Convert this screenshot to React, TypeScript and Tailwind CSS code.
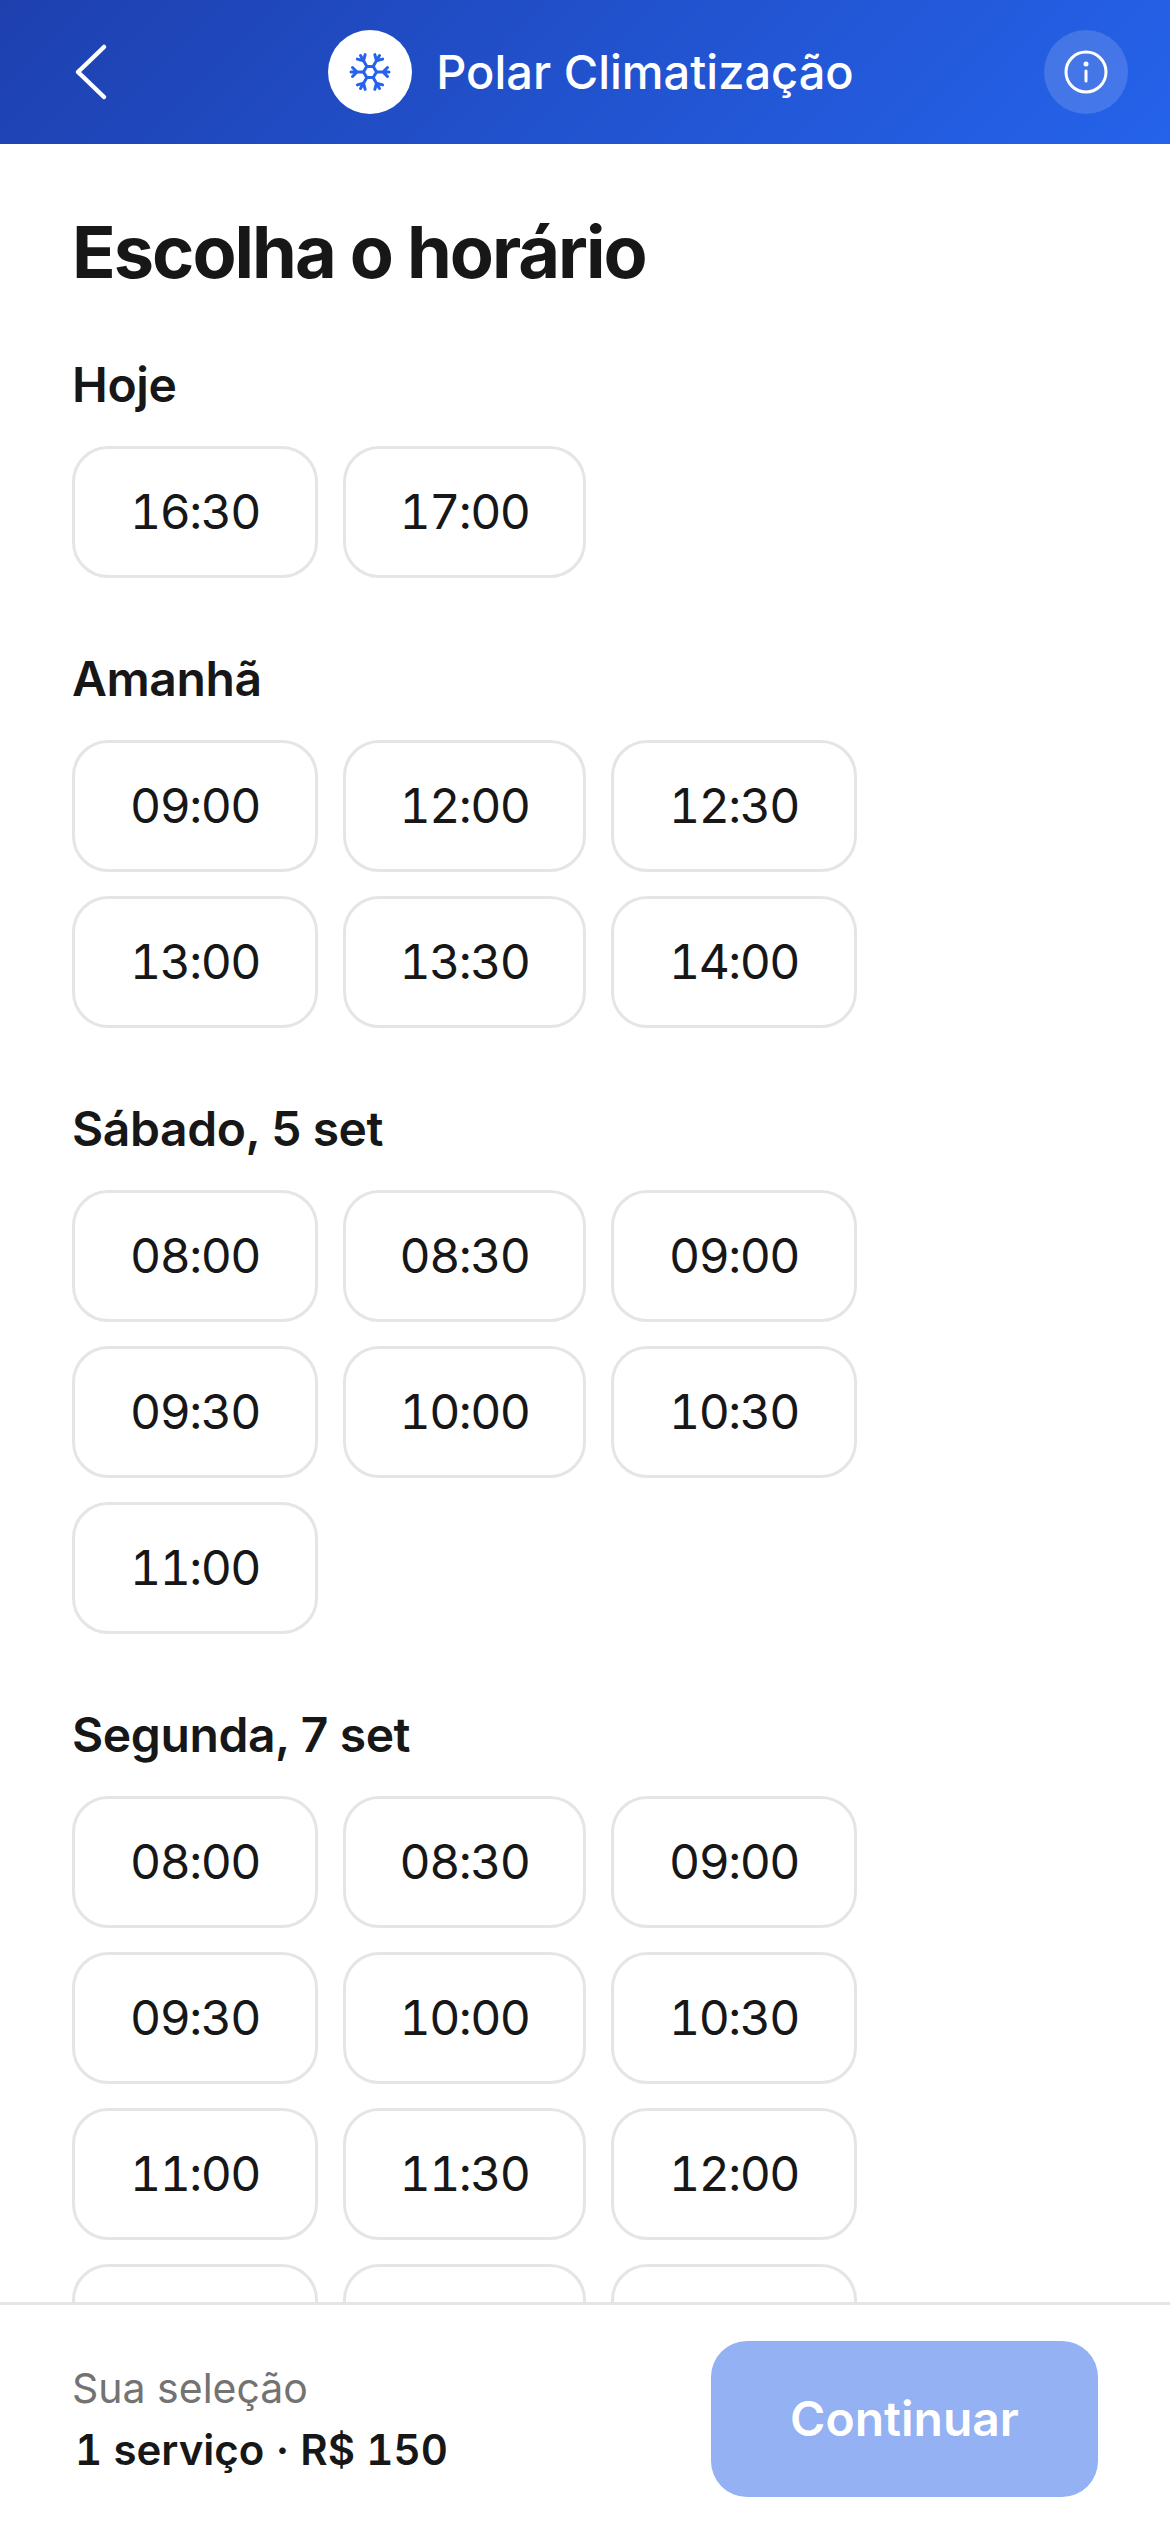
import React from "react";

const dias = [
  { nome: "Hoje", horarios: ["16:30", "17:00"] },
  { nome: "Amanhã", horarios: ["09:00", "12:00", "12:30", "13:00", "13:30", "14:00"] },
  { nome: "Sábado, 5 set", horarios: ["08:00", "08:30", "09:00", "09:30", "10:00", "10:30", "11:00"] },
  {
    nome: "Segunda, 7 set",
    horarios: ["08:00", "08:30", "09:00", "09:30", "10:00", "10:30", "11:00", "11:30", "12:00", "", "", ""],
  },
];

function Floco() {
  return (
    <svg width="42" height="42" viewBox="0 0 42 42" fill="none" stroke="#2563eb" strokeWidth="3" strokeLinecap="round" strokeLinejoin="round">
      <path d="M14.5 21 L17.75 15.4 H24.25 L27.5 21 L24.25 26.6 H17.75 Z" />
      {[0, 60, 120, 180, 240, 300].map((angulo) => (
        <g key={angulo} transform={`rotate(${angulo} 21 21)`}>
          <path d="M27.5 21 H40 M34 21 L38.5 16.5 M34 21 L38.5 25.5" />
        </g>
      ))}
    </svg>
  );
}

function App() {
  return (
    <div className="flex flex-col h-[2532px] w-[1170px] overflow-hidden bg-white text-[#171717] font-['Inter',sans-serif]">
      <header className="flex items-center justify-between h-[144px] shrink-0 pl-[72px] pr-[42px] bg-[linear-gradient(135deg,#1e40af,#2563eb)]">
        <div className="w-[66px]">
          <svg width="36" height="58" viewBox="0 0 36 58" fill="none" stroke="white" strokeWidth="4.5" strokeLinecap="round" strokeLinejoin="round">
            <path d="M32 4 L6 29 L32 54" />
          </svg>
        </div>
        <div className="flex items-center gap-[24px]">
          <div className="flex items-center justify-center w-[84px] h-[84px] rounded-full bg-white">
            <Floco />
          </div>
          <span className="text-[47px] font-[550] text-white">Polar Climatização</span>
        </div>
        <div className="flex items-center justify-center w-[84px] h-[84px] rounded-full bg-white/15">
          <svg width="44" height="44" viewBox="0 0 44 44" fill="none" stroke="white" strokeWidth="3" strokeLinecap="round">
            <circle cx="22" cy="22" r="20" />
            <path d="M22 21 V31" />
            <circle cx="22" cy="14" r="1" fill="white" />
          </svg>
        </div>
      </header>

      <main className="flex-1 overflow-hidden px-[72px] pt-[64px]">
        <h1 className="text-[72px] leading-[88px] font-bold tracking-[-2px] mb-[60px]">Escolha o horário</h1>
        <div className="flex flex-col gap-[72px]">
          {dias.map((dia, index) => (
            <section key={index}>
              <h2 className="text-[48px] leading-[58px] font-semibold tracking-[-0.4px] mb-[32px]">{dia.nome}</h2>
              <div className="grid grid-cols-[246px_243px_246px] gap-x-[25px] gap-y-[24px]">
                {dia.horarios.map((hora, i) => (
                  <button
                    key={i}
                    className="flex items-center justify-center h-[132px] rounded-[36px] border-[3px] border-[#e5e5e5] bg-white text-[48px] tabular-nums tracking-[-1.5px]"
                  >
                    {hora}
                  </button>
                ))}
              </div>
            </section>
          ))}
        </div>
      </main>

      <footer className="flex items-center justify-between h-[230px] shrink-0 border-t-[3px] border-[#e5e5e5] bg-white px-[72px]">
        <div className="flex flex-col gap-[10px]">
          <span className="text-[41px] leading-[52px] text-[#737373]">Sua seleção</span>
          <span className="ml-[3px] text-[42px] leading-[52px] font-semibold tabular-nums">1 serviço · R$ 150</span>
        </div>
        <button className="w-[387px] h-[156px] rounded-[36px] bg-[#93b1f3] text-[48px] font-semibold text-white">
          Continuar
        </button>
      </footer>
    </div>
  );
}

export default App;
